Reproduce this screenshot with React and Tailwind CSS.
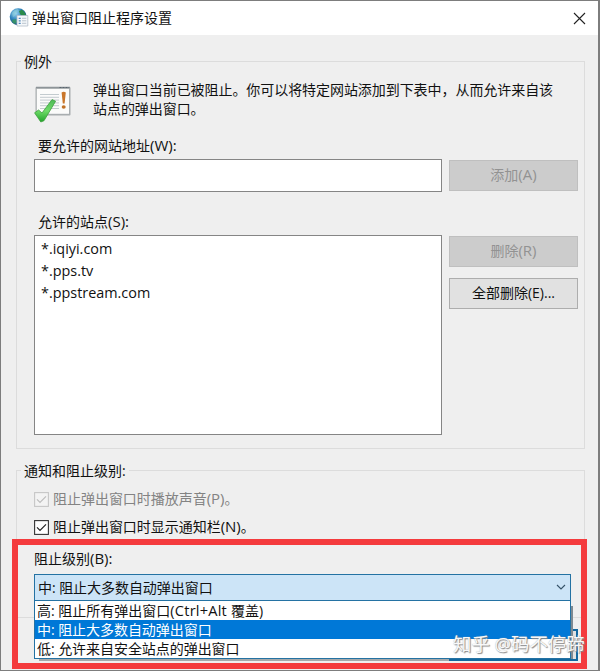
const button = 'flex items-center justify-center w-[129px] h-[31px] shrink-0 border pb-px';

function GlobeIcon() {
  return (
    <svg width="20" height="20" viewBox="0 0 20 20">
      <defs>
        <radialGradient id="globe" cx="0.35" cy="0.3" r="0.75">
          <stop offset="0" stopColor="#9bd6f0" />
          <stop offset="0.5" stopColor="#2f83bd" />
          <stop offset="1" stopColor="#123f75" />
        </radialGradient>
      </defs>
      <circle cx="9.2" cy="8.7" r="8.5" fill="url(#globe)" />
      <path d="M3 5 Q6 1 9 1 L10 3 L7 5 L6 8 L4 9 Z" fill="#8fd0d8" opacity="0.5" />
      <path d="M10 3 L13 1.8 Q17 5 17 8 L13 8 L11 6 Z" fill="#2b8c4b" />
      <path d="M3 12 L7 11 L8 14 L6 16 Q3 15 3 12 Z" fill="#3b9a5c" opacity="0.8" />
      <path d="M8 7.5 H18.8 V18 H8 Z" fill="#f5f8fb" stroke="#b3bdc8" strokeWidth="0.8" />
      <path d="M9.7 10.3 H11.7 M9.7 12.8 H11.7 M9.7 15.3 H11.7" stroke="#4d88bd" strokeWidth="1.3" />
      <path d="M13 10.3 H17.3 M13 12.8 H17.3 M13 15.3 H17.3" stroke="#b4bdc7" strokeWidth="0.9" />
    </svg>
  );
}

function NoticeIcon() {
  return (
    <svg width="38" height="38" viewBox="0 0 38 38">
      <defs>
        <linearGradient id="tick" x1="0" y1="0" x2="0" y2="1">
          <stop offset="0" stopColor="#4fb95a" />
          <stop offset="0.5" stopColor="#6fdc68" />
          <stop offset="1" stopColor="#22a32b" />
        </linearGradient>
      </defs>
      <rect x="1.5" y="2" width="35" height="28.6" rx="1" fill="#a9aeb0" />
      <rect x="2.8" y="3.8" width="32.2" height="25" fill="#fbfbfa" />
      <path d="M2 2.5 H36" stroke="#8d9498" strokeWidth="1.3" />
      <path d="M25.5 2.5 H35" stroke="#59656f" strokeWidth="1.2" strokeDasharray="2 1" />
      <path d="M6 9.5 H25 M6 12.3 H25 M6 15.1 H25 M6 17.9 H25 M6 20.7 H25 M6 23.5 H25" stroke="#bcc5ca" strokeWidth="0.9" />
      <path d="M27.6 7.5 Q29.7 6 31.8 7.5 L30.6 18.5 H28.8 Z" fill="#c9762a" />
      <ellipse cx="29.7" cy="22" rx="2" ry="1.8" fill="#c07025" />
      <path d="M0.6 27.8 L4.6 25 L8 28 L18 14.6 L21.6 16.2 L10 35.7 L6.8 37 Z" fill="url(#tick)" stroke="#3d9f3e" strokeWidth="0.8" />
    </svg>
  );
}

function Latin({ children }) {
  return <span className="text-[15px] leading-none">{children}</span>;
}

function Check({ children, disabled }) {
  return (
    <div className={`flex h-[28px] items-center gap-[4px] ${disabled ? 'text-[#838383]' : 'text-[#111]'}`}>
      <svg width="15" height="15" viewBox="0 0 15 15">
        <rect x="0.6" y="0.6" width="13.8" height="13.8" fill={disabled ? '#f3f3f3' : '#fff'} stroke={disabled ? '#c6c6c6' : '#333'} strokeWidth="1.1" />
        <path d="M3 7.4 L6 10.4 L12 4.4" fill="none" stroke={disabled ? '#bdbdbd' : '#222'} strokeWidth="1.2" />
      </svg>
      <span className="tracking-[-0.03px]">{children}</span>
    </div>
  );
}

export default function App() {
  return (
    <div className="relative flex h-[671px] w-[600px] flex-col overflow-hidden border-y border-l border-r-2 border-[#7d7d7d] bg-[#efefef] font-['Open_Sans','Noto_Sans_CJK_SC',sans-serif] text-[14px] leading-[20px] whitespace-nowrap text-[#111]">
      <header className="flex h-[34px] shrink-0 items-center bg-white pl-[8px]">
        <GlobeIcon />
        <h1 className="ml-[3px] grow">弹出窗口阻止程序设置</h1>
        <svg className="mr-[12px]" width="13" height="13" viewBox="0 0 13 13">
          <path d="M1 1 L12 12 M12 1 L1 12" stroke="#222" strokeWidth="1.1" />
        </svg>
      </header>

      <main className="flex flex-col pl-[15px] pt-[26px]">
        <section className="h-[388px] w-[569px] border border-[#dcdcdc] pl-[17px]">
          <h2 className="-mt-[10px] -ml-[13px] w-fit bg-[#efefef] px-[3px]">例外</h2>
          <div className="mt-[10px] flex gap-[21px]">
            <div className="mt-[3px]"><NoticeIcon /></div>
            <p className="-mt-[2px] h-[40px] leading-[19px] tracking-[-0.06px]">弹出窗口当前已被阻止。你可以将特定网站添加到下表中，从而允许来自该<br />站点的弹出窗口。</p>
          </div>
          <div className="mt-[13px] h-[20px] pl-[4px]">要允许的网站地址<Latin>(W):</Latin></div>
          <div className="mt-[3px] flex gap-[7px]">
            <div className="h-[33px] w-[408px] border border-[#858585] bg-white" />
            <div className={`${button} mt-px border-[#bfbfbf] bg-[#cccccc] text-[#929292]`}><span>添加<Latin>(A)</Latin></span></div>
          </div>
          <div className="mt-[20px] h-[20px] pl-[4px]">允许的站点<Latin>(S):</Latin></div>
          <div className="mt-[3px] flex gap-[7px]">
            <ul className="h-[200px] w-[408px] border border-[#858585] bg-white pt-[2px] pl-[6px] text-[14.4px] leading-[22px]">
              <li>*.iqiyi.com</li>
              <li>*.pps.tv</li>
              <li>*.ppstream.com</li>
            </ul>
            <div className="flex flex-col gap-[11px] pt-[1px]">
              <div className={`${button} border-[#bfbfbf] bg-[#cccccc] text-[#929292]`}><span>删除<Latin>(R)</Latin></span></div>
              <div className={`${button} border-[#adadad] bg-[#e1e1e1]`}><span>全部删除(E)...</span></div>
            </div>
          </div>
        </section>

        <section className="mt-[21px] h-[148px] w-[569px] border border-[#dcdcdc] pl-[17px]">
          <h2 className="-mt-[10px] -ml-[13px] w-fit bg-[#efefef] px-[3px]">通知和阻止级别:</h2>
          <div className="mt-[4px]">
            <Check disabled>阻止弹出窗口时播放声音<Latin>(P)</Latin>。</Check>
            <Check>阻止弹出窗口时显示通知栏<Latin>(N)</Latin>。</Check>
          </div>
          <div className="mt-[8px] h-[20px]">阻止级别<Latin>(B):</Latin></div>
          <div className="relative mt-[5px] h-[27px] w-[537px] border border-[#2472a3] bg-[#cce4f7]">
            <div className="flex h-[25px] items-center pr-[4px] pl-[3px]">
              <span className="grow tracking-[-0.05px]">中: 阻止大多数自动弹出窗口</span>
              <svg width="10" height="7" viewBox="0 0 10 7">
                <path d="M1 1 L5 5 L9 1" fill="none" stroke="#355269" strokeWidth="1.1" />
              </svg>
            </div>
            <div className="absolute top-[31px] left-[4px] h-[55px] w-[534px] bg-[#a5a9ab]" />
            <div className="absolute top-[54px] left-[414px] h-[32px] w-[129px] border-2 border-[#13689f] bg-[#e1e1e1]" />
            <div className="absolute top-[31px] left-[535px] h-[53px] w-[3px] bg-[#7f8a92]" />
            <ul className="absolute top-[25px] -left-px w-[537px] border border-[#2472a3] bg-white leading-[19px]">
              <li className="h-[19px] pl-[2px]">高: 阻止所有弹出窗口<span className="text-[14.6px] leading-none tracking-[0.2px]">(Ctrl+Alt </span>覆盖)</li>
              <li className="h-[19px] bg-[#0078d7] pl-[2px] tracking-[-0.05px] text-white">中: 阻止大多数自动弹出窗口</li>
              <li className="h-[19px] pl-[2px] tracking-[-0.05px]">低: 允许来自安全站点的弹出窗口</li>
            </ul>
          </div>
        </section>
      </main>

      <div className="absolute top-[538px] left-[11px] h-[130px] w-[575px] border-6 border-[#f43b3d]" />
      <div className="absolute top-[630px] left-[452px] text-[18.4px] leading-[26px] text-white/95 [text-shadow:1px_1px_1px_#888,0_0_1px_#aaa]">知乎 @码不停蹄</div>
    </div>
  );
}
